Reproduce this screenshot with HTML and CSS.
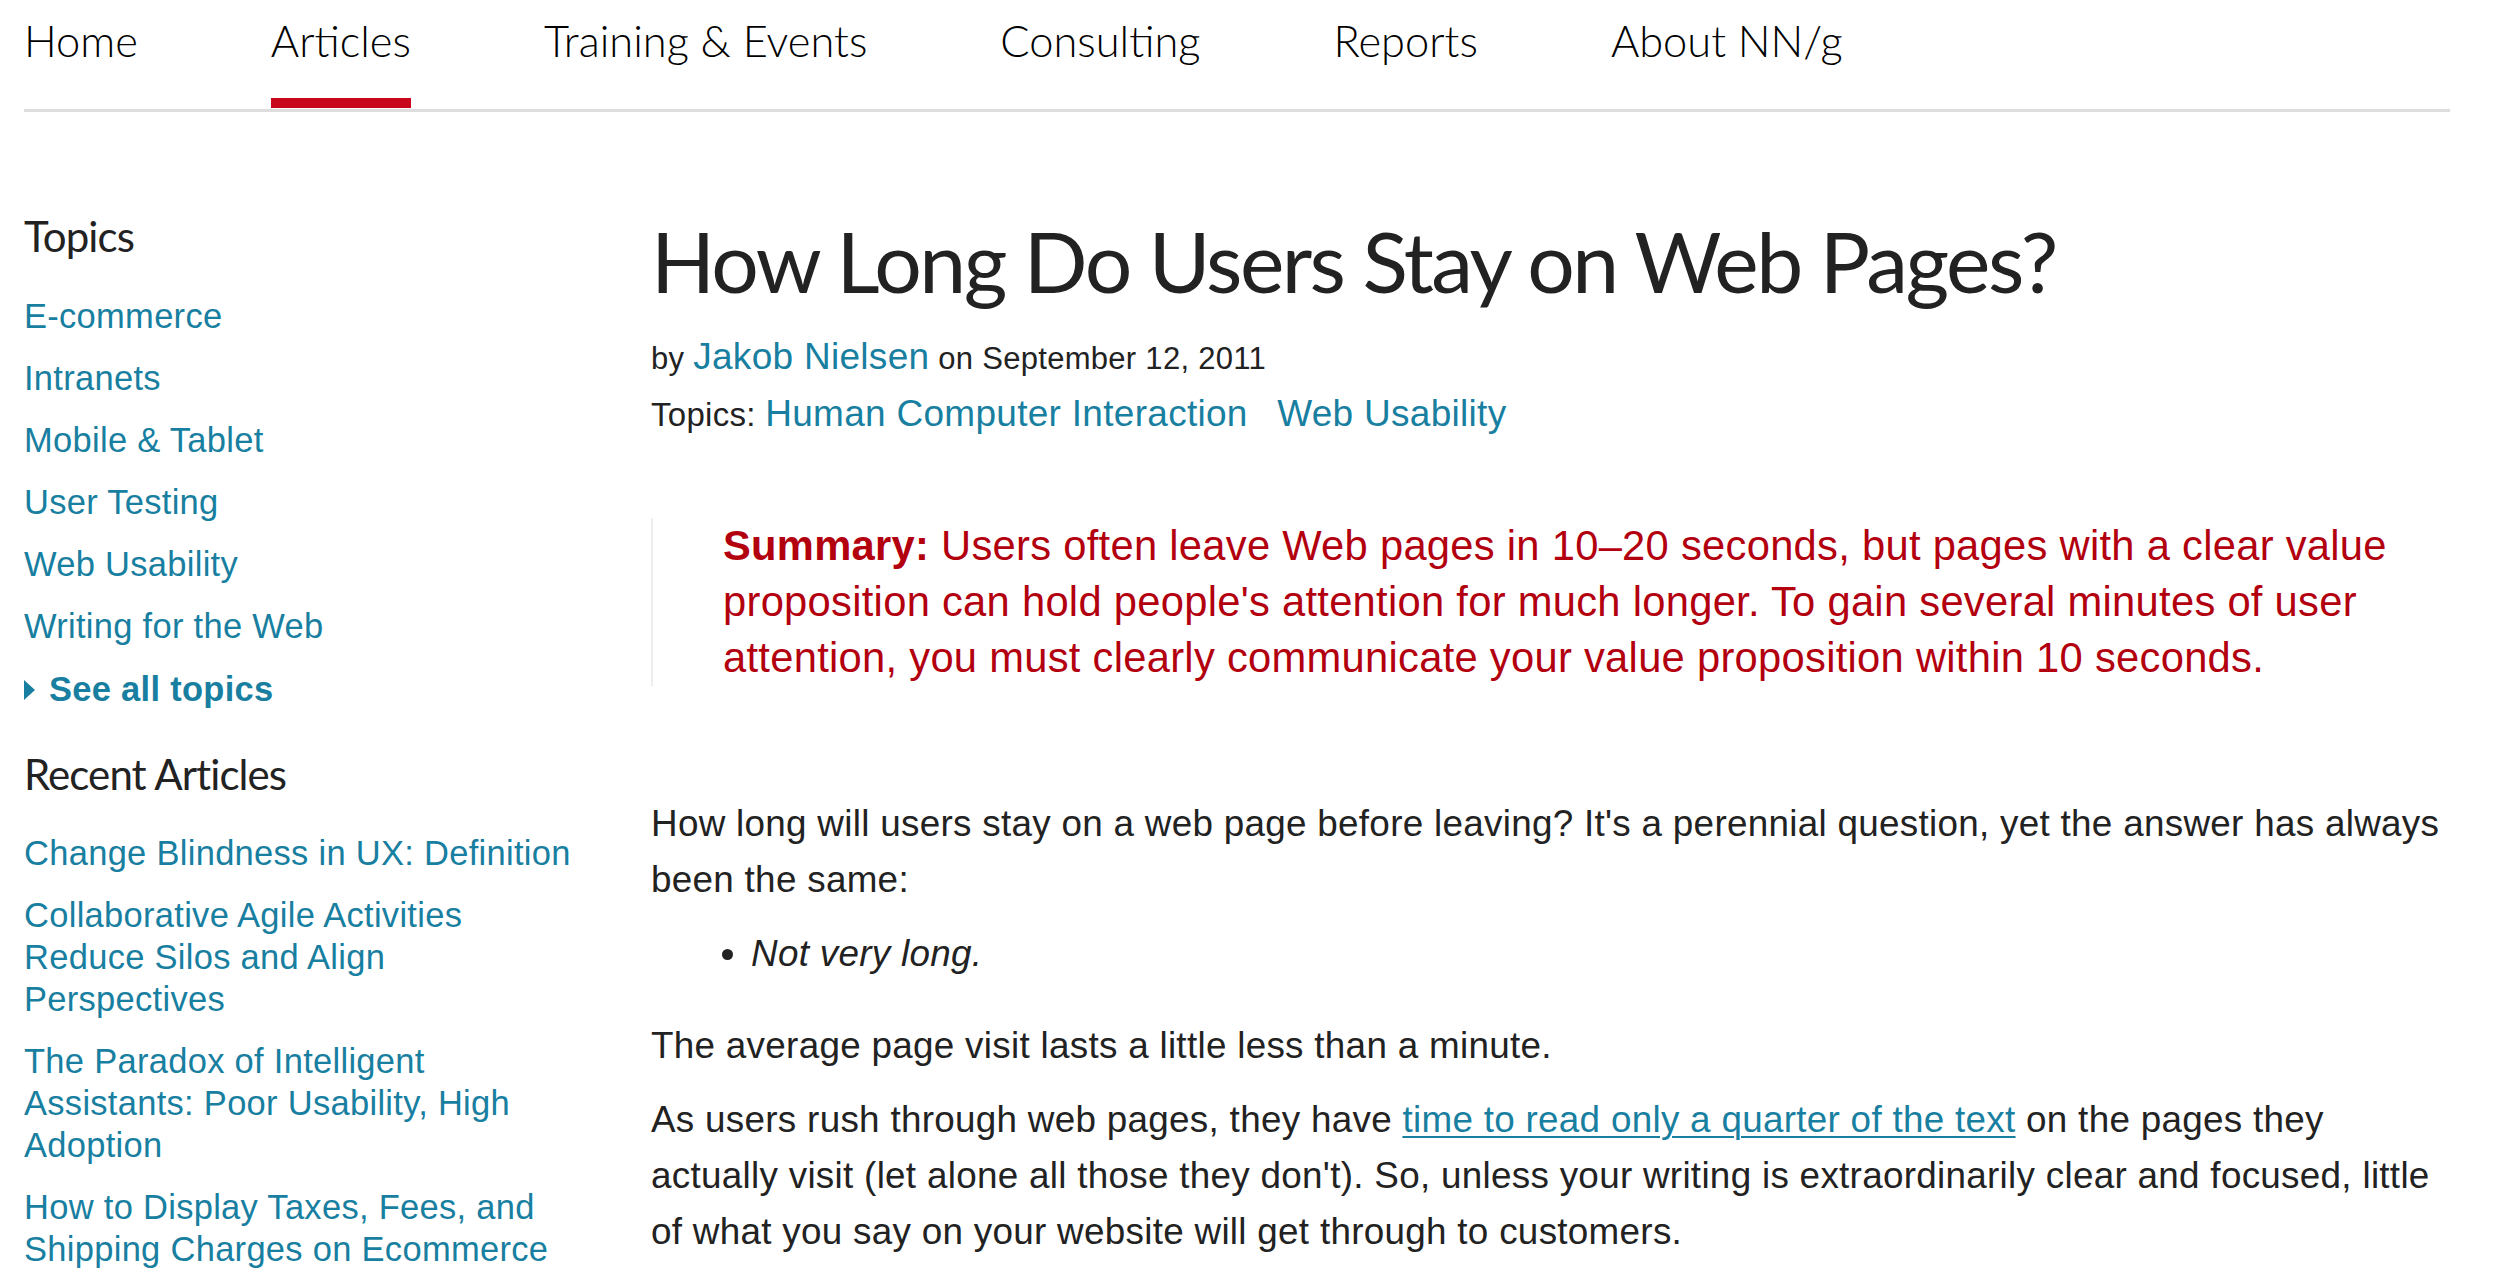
FILE: index.html
```html
<!DOCTYPE html>
<html lang="en">
<head>
<meta charset="utf-8">
<title>How Long Do Users Stay on Web Pages?</title>
<link rel="stylesheet" href="styles.css">
</head>
<body>
<header class="topnav">
  <nav class="nav-list">
    <a class="nav-item" href="#">Home</a>
    <a class="nav-item active" href="#">Articles</a>
    <a class="nav-item" href="#">Training &amp; Events</a>
    <a class="nav-item" href="#">Consulting</a>
    <a class="nav-item" href="#">Reports</a>
    <a class="nav-item" href="#">About NN/g</a>
  </nav>
</header>
<div class="layout">
  <aside class="sidebar">
    <h3 class="side-title">Topics</h3>
    <ul class="side-links">
      <li><a href="#">E-commerce</a></li>
      <li><a href="#">Intranets</a></li>
      <li><a href="#">Mobile &amp; Tablet</a></li>
      <li><a href="#">User Testing</a></li>
      <li><a href="#">Web Usability</a></li>
      <li><a href="#">Writing for the Web</a></li>
      <li class="see-all"><a href="#"><span class="tri"></span>See all topics</a></li>
    </ul>
    <h3 class="side-title recent-title">Recent Articles</h3>
    <ul class="side-links recent">
      <li><a href="#">Change Blindness in UX: Definition</a></li>
      <li><a href="#">Collaborative Agile Activities Reduce Silos and Align Perspectives</a></li>
      <li><a href="#">The Paradox of Intelligent Assistants: Poor Usability, High Adoption</a></li>
      <li><a href="#">How to Display Taxes, Fees, and Shipping Charges on Ecommerce Sites</a></li>
    </ul>
  </aside>
  <main class="article">
    <h1 class="title">How Long Do Users Stay on Web Pages?</h1>
    <div class="byline">by <a href="#">Jakob Nielsen</a> on September 12, 2011</div>
    <div class="topics-line">Topics: <a href="#">Human Computer Interaction</a> <a class="second" href="#">Web Usability</a></div>
    <blockquote class="summary"><strong>Summary:</strong> Users often leave Web pages in 10–20 seconds, but pages with a clear value proposition can hold people's attention for much longer. To gain several minutes of user attention, you must clearly communicate your value proposition within 10 seconds.</blockquote>
    <p>How long will users stay on a web page before leaving? It's a perennial question, yet the answer has always been the same:</p>
    <ul class="bullets">
      <li><em>Not very long.</em></li>
    </ul>
    <p>The average page visit lasts a little less than a minute.</p>
    <p>As users rush through web pages, they have <a class="inline" href="#">time to read only a quarter of the text</a> on the pages they actually visit (let alone all those they don't). So, unless your writing is extraordinarily clear and focused, little of what you say on your website will get through to customers.</p>
  </main>
</div>
</body>
</html>
```
FILE: styles.css
```css
* { box-sizing: border-box; }
html, body { margin: 0; padding: 0; background: #fff; }
body {
  font-family: "Liberation Sans", Arial, Helvetica, sans-serif;
  color: #222;
  letter-spacing: 0.018em;
}
a { color: #187fa1; text-decoration: none; }

.topnav {
  margin: 0 52px 0 24px;
  padding-bottom: 1px;
  border-bottom: 3px solid #ddd;
}
.nav-list { display: flex; gap: 133px; }
.nav-item {
  font-family: Lato, "Open Sans", sans-serif;
  font-weight: 300;
  font-size: 43.4px;
  line-height: 60px;
  letter-spacing: 0;
  color: #000;
  padding-top: 10px;
  padding-bottom: 28px;
  border-bottom: 10px solid transparent;
}
.nav-item.active { border-bottom-color: #c8071a; }

.layout {
  display: flex;
  gap: 71px;
  margin: 96px 0 0 24px;
}
.sidebar { width: 556px; flex: none; }
.side-title {
  font-family: Lato, "Open Sans", sans-serif;
  font-weight: 400;
  font-size: 42px;
  line-height: 52.8px;
  letter-spacing: -0.9px;
  color: #222;
  margin: 2px 0 0;
}
.side-links { list-style: none; margin: 32px 0 0; padding: 0; }
.side-links li { font-size: 34.5px; line-height: 42px; margin: 0 0 20px; }
.side-links li:last-child { margin-bottom: 0; }
.see-all a { font-weight: 700; display: inline-flex; align-items: center; }
.tri {
  width: 0; height: 0;
  border-left: 11px solid #187fa1;
  border-top: 10px solid transparent;
  border-bottom: 10px solid transparent;
  margin: 2px 14px 0 0;
}
.recent-title { margin-top: 38px; }
.recent { margin-top: 31.5px; }

.article { width: 1800px; flex: none; }
.title {
  font-family: Lato, "Open Sans", sans-serif;
  font-weight: 400;
  font-size: 84px;
  line-height: 105px;
  letter-spacing: -2.5px;
  color: #222;
  margin: 0;
}
.byline { margin-top: 18px; font-size: 31px; line-height: 56px; }
.byline a { font-size: 37px; line-height: 1; }
.topics-line { font-size: 33px; line-height: 56px; }
.topics-line a { font-size: 37px; line-height: 1; }
.topics-line a.second { margin-left: 20px; }

.summary {
  margin: 75px 0 110px;
  padding: 0 0 0 70px;
  border-left: 2px solid #eee;
  color: #b3000f;
  font-size: 41.7px;
  line-height: 56px;
}
.summary strong { font-weight: 700; }

.article p { margin: 0 0 18px; font-size: 36.85px; line-height: 56px; }
.bullets { margin: 0 0 36px; padding-left: 100px; font-size: 36.85px; line-height: 56px; }
a.inline { text-decoration: underline; text-decoration-thickness: 2px; text-underline-offset: 4px; }
```
